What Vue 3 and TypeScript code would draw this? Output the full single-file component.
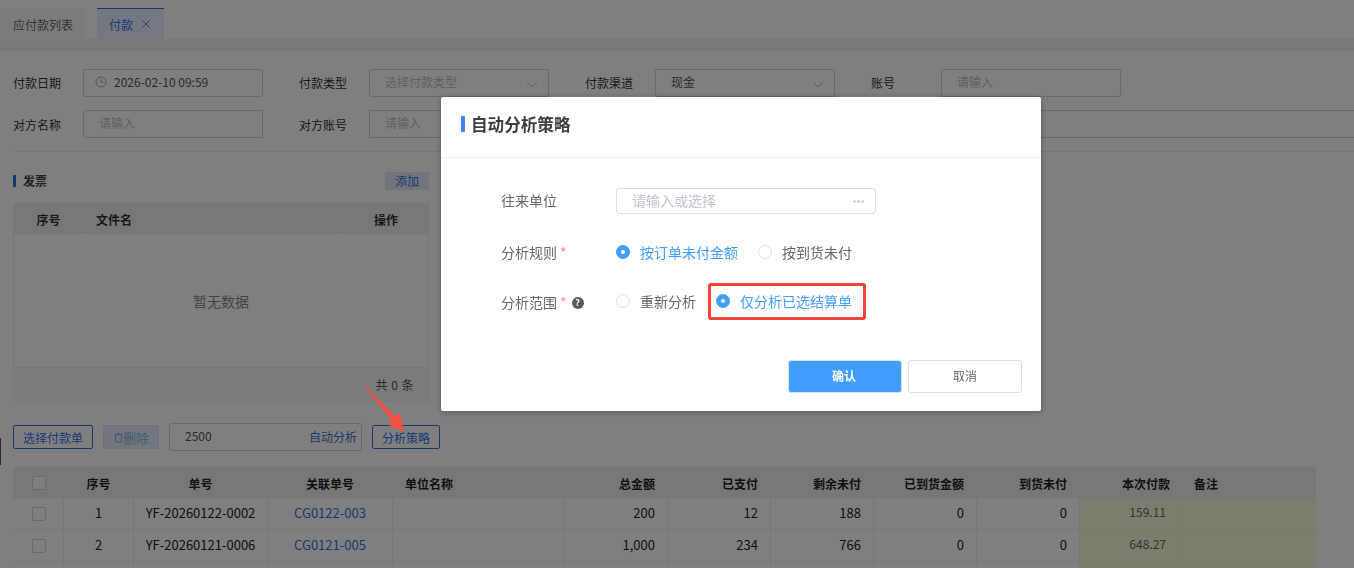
<script setup lang="ts">
interface Row { key: number; no: string; code: string; link: string; total: string; paid: string; left: string; arrived: string; unarrived: string; pay: string }
const rows: Row[] = [
  { key: 1, no: '1', code: 'YF-20260122-0002', link: 'CG0122-003', total: '200', paid: '12', left: '188', arrived: '0', unarrived: '0', pay: '159.11' },
  { key: 2, no: '2', code: 'YF-20260121-0006', link: 'CG0121-005', total: '1,000', paid: '234', left: '766', arrived: '0', unarrived: '0', pay: '648.27' },
  { key: 3, no: '', code: '', link: '', total: '', paid: '', left: '', arrived: '', unarrived: '', pay: '' },
]
const amountHeads = ['总金额', '已支付', '剩余未付', '已到货金额', '到货未付']
</script>

<template>
  <div class="page">
    <div class="tabs">
      <div class="tab">应付款列表</div>
      <div class="tab active">付款<svg class="close" viewBox="0 0 8 8" width="8" height="8"><path d="M.8.8l6.400 6.400M7.200.8L.8 7.200" fill="none" stroke="#4f7fe0" stroke-width="1" /></svg></div>
    </div>
    <div class="strip"></div>

    <div class="form">
      <div class="form-row">
        <label class="lab">付款日期</label>
        <div class="inp val">
          <svg class="clock" viewBox="0 0 12 12" width="12" height="12"><circle cx="6" cy="6" r="5" fill="none" stroke="#aaa" stroke-width="1" /><path d="M6 3v3.2h2.6" fill="none" stroke="#aaa" stroke-width="1" /></svg>
          2026-02-10 09:59
        </div>
        <label class="lab">付款类型</label>
        <div class="inp ph sel">选择付款类型<svg class="chev" viewBox="0 0 12 7" width="12" height="7"><path d="M1 1l5 5 5-5" fill="none" stroke="#bbb" stroke-width="1" /></svg></div>
        <label class="lab">付款渠道</label>
        <div class="inp val sel">现金<svg class="chev" viewBox="0 0 12 7" width="12" height="7"><path d="M1 1l5 5 5-5" fill="none" stroke="#bbb" stroke-width="1" /></svg></div>
        <label class="lab">账号</label>
        <div class="inp ph">请输入</div>
      </div>
      <div class="form-row second">
        <label class="lab">对方名称</label>
        <div class="inp ph">请输入</div>
        <label class="lab">对方账号</label>
        <div class="inp ph wide">请输入</div>
      </div>
    </div>
    <div class="rule"></div>

    <div class="invoice">
      <div class="sec-head">
        <span class="mark"></span><span class="sec-title">发票</span>
        <span class="add">添加</span>
      </div>
      <div class="mini-table">
        <div class="mini-head">
          <div class="mh c1">序号</div>
          <div class="mh c2">文件名</div>
          <div class="mh c3">操作</div>
        </div>
        <div class="mini-empty">暂无数据</div>
        <div class="mini-foot">共 0 条</div>
      </div>
    </div>

    <div class="toolbar">
      <button class="btn">选择付款单</button>
      <button class="btn disabled">
        <svg viewBox="0 0 10 12" width="9" height="11"><path d="M.5 3h9M3.500 3V1.500h3V3M1.500 3l.5 8h6l.5-8" fill="none" stroke="#7ba6d8" stroke-width="1" /></svg><span class="del">删除</span>
      </button>
      <div class="amount"><span>2500</span><span class="auto">自动分析</span></div>
      <button class="btn">分析策略</button>
    </div>

    <div class="grid">
      <div class="g-row g-head">
        <div class="g-c check"><i class="box"></i></div>
        <div class="g-c no">序号</div>
        <div class="g-c code">单号</div>
        <div class="g-c link-c">关联单号</div>
        <div class="g-c unit left">单位名称</div>
        <div v-for="h in amountHeads" :key="h" class="g-c amt">{{ h }}</div>
        <div class="g-c amt pay-h">本次付款</div>
        <div class="g-c note left">备注</div>
      </div>
      <div v-for="r in rows" :key="r.key" class="g-row">
        <div class="g-c check"><i v-if="r.no" class="box"></i></div>
        <div class="g-c no">{{ r.no }}</div>
        <div class="g-c code">{{ r.code }}</div>
        <div class="g-c link-c blue">{{ r.link }}</div>
        <div class="g-c unit"></div>
        <div class="g-c amt">{{ r.total }}</div>
        <div class="g-c amt">{{ r.paid }}</div>
        <div class="g-c amt">{{ r.left }}</div>
        <div class="g-c amt">{{ r.arrived }}</div>
        <div class="g-c amt">{{ r.unarrived }}</div>
        <div class="g-c amt yellow pay">{{ r.pay }}</div>
        <div class="g-c note yellow"></div>
      </div>
    </div>
    <div class="edge-handle"></div>
  </div>

  <div class="mask"></div>

  <div class="modal">
    <div class="m-head"><span class="m-mark"></span><span class="m-title">自动分析策略</span></div>
    <div class="m-body">
      <div class="m-row r1">
        <div class="m-lab">往来单位</div>
        <div class="m-input"><span>请输入或选择</span><svg viewBox="0 0 11 3" width="11" height="3"><circle cx="1.500" cy="1.500" r="1.300" fill="#c4c6cc" /><circle cx="5.500" cy="1.500" r="1.300" fill="#c4c6cc" /><circle cx="9.500" cy="1.500" r="1.300" fill="#c4c6cc" /></svg></div>
      </div>
      <div class="m-row r2">
        <div class="m-lab">分析规则 <em>*</em></div>
        <div class="radios">
          <span class="radio on"><i></i>按订单未付金额</span>
          <span class="radio"><i></i>按到货未付</span>
        </div>
      </div>
      <div class="m-row r3">
        <div class="m-lab">分析范围 <em>*</em><b class="q">?</b></div>
        <div class="radios">
          <span class="radio"><i></i>重新分析</span>
          <span class="radio on marked"><i></i>仅分析已选结算单</span>
        </div>
      </div>
    </div>
    <div class="m-foot">
      <button class="m-btn ok">确认</button>
      <button class="m-btn">取消</button>
    </div>
  </div>

  <svg class="arrow" width="50" height="55" viewBox="0 0 50 55">
    <path d="M3 1.500 L5.500 2.500 L34.500 31.500 L39 27 L43 47 L26 39 L31 35.500 Z" fill="#f4503f" />
  </svg>
</template>

<style>
html, body { margin: 0; padding: 0; background: #fff; overflow: hidden; }
</style>

<style scoped>
* { box-sizing: border-box; }
.page {
  width: 1354px; height: 568px; overflow: hidden; position: relative; background: #fff; color: #333;
  font: 12px/1.4 "Noto Sans CJK SC", "Liberation Sans", sans-serif;
  padding-top: 8px;
}
.tabs { display: flex; height: 31px; padding-left: 1px; gap: 12px; }
.tab { width: 84px; background: #f6f7f8; display: flex; align-items: center; justify-content: center; color: #666; padding-top: 3px; }
.tab.active { width: 67px; background: #e9effd; color: #2f73f0; border-top: 1px solid #2467e8; padding-left: 12px; justify-content: flex-start; gap: 9px; padding-top: 2px; }
.close { position: relative; top: -1px; }
.strip { height: 12px; background: #f2f3f5; }
.form { padding: 18px 0 0 13px; display: flex; flex-direction: column; gap: 13px; }
.form-row { display: flex; height: 28px; }
.lab { width: 70px; line-height: 28px; color: #333; flex: none; }
.second .lab { line-height: 30px; }
.inp { width: 180px; height: 28px; border: 1px solid #d3d5d9; border-radius: 2px; margin-right: 36px; padding: 0 0 2px 15px; flex: none; display: flex; align-items: center; position: relative; }
.inp.ph { color: #bdbfc4; padding-bottom: 1px; }
.inp.val { color: #555; }
.clock { margin: 0 7px 0 -4px; }
.chev { position: absolute; right: 10px; top: 11px; }
.inp.wide { width: 986px; margin-right: 0; border-right: 0; border-radius: 2px 0 0 2px; }
.rule { height: 1px; background: #eeeff1; margin: 13px 0 0 13px; }
.invoice { width: 416px; margin: 20px 0 0 13px; }
.sec-head { display: flex; align-items: center; height: 18px; }
.mark { width: 3px; height: 12px; background: #2f6fe6; margin-right: 7px; }
.sec-title { font-weight: 700; color: #444; }
.add { margin-left: auto; width: 44px; height: 18px; line-height: 18px; text-align: center; background: #e4ebfa; color: #3d77e6; font-size: 12px; }
.mini-table { margin-top: 13px; background: #f7f8f9; border: 1px solid #eceef0; border-width: 1px 1px 0; height: 199px; display: flex; flex-direction: column; }
.mini-head { display: flex; height: 30px; background: #eeeff1; font-weight: 700; line-height: 32px; flex: none; }
.mh { border-right: 1px solid #e6e7ea; }
.c1 { width: 70px; text-align: center; }
.c2 { width: 260px; padding-left: 12px; }
.c3 { flex: 1; text-align: center; border-right: 0; }
.mini-empty { height: 134px; flex: none; background: #fff; text-align: center; line-height: 134px; color: #888; font-size: 14px; border-bottom: 1px solid #eceef0; }
.mini-foot { flex: 1; background: #f5f6f7; text-align: right; padding: 9px 14px 0 0; color: #555; letter-spacing: .5px; }
.toolbar { display: flex; align-items: center; gap: 10px; height: 28px; margin: 21px 0 0 13px; }
.btn { height: 24px; border: 1px solid #2f73f0; background: #fff; color: #2f73f0; border-radius: 2px; font: 12px "Noto Sans CJK SC", sans-serif; padding: 0 9px; display: flex; align-items: center; }
.btn.disabled { background: #e3eefb; border-color: #d5e5f7; color: #8fb7e6; width: 56px; padding: 0 0 0 10px; }
.del { font-size: 13px; }
.amount { width: 193px; height: 28px; border: 1px solid #d3d5d9; border-radius: 2px; display: flex; align-items: center; justify-content: space-between; padding: 0 4px 2px 15px; color: #555; }
.auto { color: #3b6fd8; position: relative; top: 1px; }
.grid { margin: 16px 0 0 13px; width: 1303px; }
.g-row { display: flex; height: 32px; border-bottom: 1px solid #eceef0; font-size: 13px; }
.g-head { height: 31px; background: #eeeff1; font-weight: 700; border-bottom: 0; font-size: 12px; }
.g-c { border-right: 1px solid #eceef0; flex: none; display: flex; align-items: center; justify-content: center; color: #222; }
.g-head .g-c { border-right-color: #e6e7ea; padding-top: 3px; }
.check { width: 51px; padding-left: 1px; }
.g-head .check { padding-top: 0; }
.box { width: 14px; height: 14px; border: 1px solid #d3d5d9; border-radius: 2px; background: #fff; display: block; }
.no { width: 70px; }
.code { width: 134px; }
.link-c { width: 125px; }
.blue { color: #2f73f0; }
.unit { width: 172px; }
.left { justify-content: flex-start; padding-left: 12px; }
.amt { width: 103px; justify-content: flex-end; padding-right: 12px; }
.pay-h, .pay { width: 102px; }
.pay-h { padding-right: 11px; }
.g-c.note { width: 134px; border-right: 0; }
.yellow { background: #fbfbdf; border-right-color: #f2f2d6; }
.pay { padding: 0 15px 2px 0; color: #666; font-size: 12px; }
.edge-handle { position: absolute; left: 0; top: 438px; width: 1px; height: 27px; background: #555; }

.mask { position: fixed; inset: 0; background: rgba(0, 0, 0, .5); }
.modal {
  position: fixed; left: 441px; top: 97px; width: 600px; height: 314px; background: #fff; border-radius: 2px;
  box-shadow: 0 1px 6px rgba(0, 0, 0, .3); color: #666;
  font: 14px/1.4 "Noto Sans CJK SC", "Liberation Sans", sans-serif;
}
.m-head { height: 61px; border-bottom: 1px solid #f0f0f2; display: flex; align-items: center; padding: 0 0 6px 20px; }
.m-mark { width: 4px; height: 16px; border-radius: 1px; background: #3f83f8; margin-right: 6px; }
.m-title { font-size: 16.600px; font-weight: 700; color: #3d3d3d; position: relative; top: 1px; }
.m-body { padding-left: 60px; }
.m-row { display: flex; align-items: center; }
.r1 { margin-top: 30px; height: 26px; }
.r2 { margin-top: 26px; height: 26px; }
.r3 { margin-top: 17px; height: 37px; }
.m-lab { width: 115px; flex: none; color: #666; font-size: 14px; display: flex; align-items: center; gap: 3px; }
.r3 .m-lab { padding-top: 2px; }
.m-lab em { color: #f88; font-style: normal; }
.q { width: 12px; height: 12px; border-radius: 50%; background: #5a5a5f; color: #fff; font-size: 9px; line-height: 12px; text-align: center; margin-left: 2px; }
.m-input { width: 260px; height: 26px; border: 1px solid #dcdfe6; border-radius: 3px; display: flex; justify-content: space-between; align-items: center; padding: 0 11px 0 15px; color: #c0c4cc; }
.radios { display: flex; align-items: center; }
.radio { display: inline-flex; align-items: center; color: #666; margin-right: 20px; font-size: 14px; }
.radio i { width: 14px; height: 14px; border: 1px solid #dcdfe6; border-radius: 50%; margin-right: 10px; background: #fff; flex: none; position: relative; top: -1px; }
.radio.on { color: #409eff; }
.radio.on i { background: #409eff; border-color: #409eff; }
.radio.on i::after { content: ""; position: absolute; left: 4px; top: 4px; width: 4px; height: 4px; border-radius: 50%; background: #fff; }
.marked { margin: 0 0 0 -8px; height: 37px; width: 158px; padding-left: 5px; border: 3px solid #f44336; border-radius: 3px; }
.m-foot { position: absolute; right: 19px; top: 263px; display: flex; gap: 6px; }
.m-btn { width: 114px; height: 33px; border: 1px solid #dcdfe6; background: #fff; color: #666; border-radius: 3px; font: 12px "Noto Sans CJK SC", sans-serif; padding: 0 0 2px; }
.m-btn.ok { background: #409eff; border-color: #d5e4f5; color: #fff; font-weight: 700; padding-right: 2px; }
.arrow { position: fixed; left: 361px; top: 385px; }
</style>
